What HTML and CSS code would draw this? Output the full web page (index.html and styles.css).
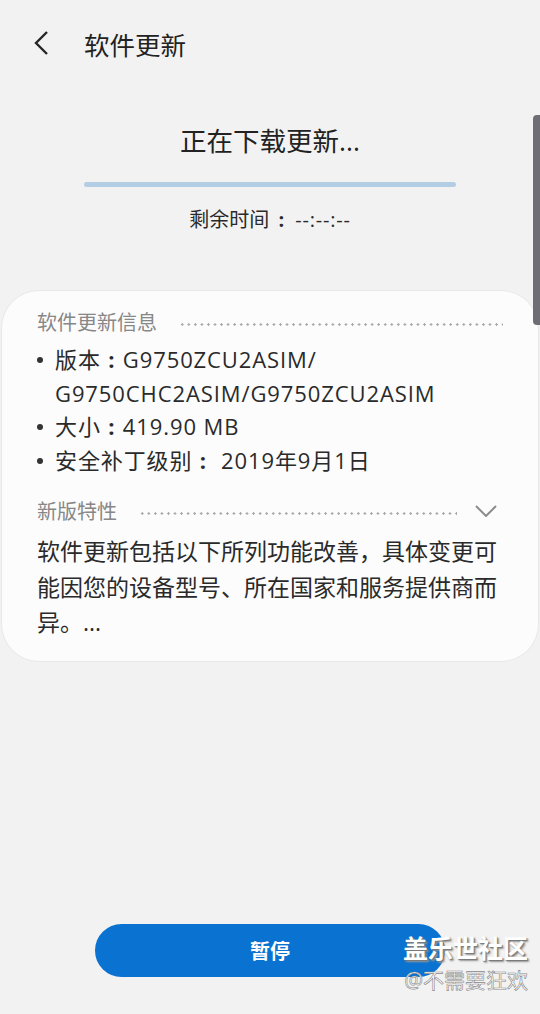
FILE: index.html
```html
<!DOCTYPE html>
<html lang="zh">
<head>
  <meta charset="UTF-8">
  <title>软件更新</title>
  <meta name="viewport" content="width=device-width, initial-scale=1.0">
  <link rel="stylesheet" href="styles.css">
</head>
<body>
<div class="screen">
  <header class="topbar">
    <svg class="back" width="16" height="26" viewBox="0 0 16 26"><path d="M14 2 L3 13 L14 24" fill="none" stroke="#262626" stroke-width="2.4"/></svg>
    <span class="title">软件更新</span>
  </header>

  <section class="status">
    <div class="status-title">正在下载更新...</div>
    <div class="bar"></div>
    <div class="remain">剩余时间<span class="colon">:</span><span class="clock">--:--:--</span></div>
  </section>

  <section class="card">
    <div class="label"><span>软件更新信息</span><i class="dots"></i></div>
    <ul class="info">
      <li><span class="dot"></span><span>版本<span class="colon">:</span>G9750ZCU2ASIM/<br>G9750CHC2ASIM/G9750ZCU2ASIM</span></li>
      <li><span class="dot"></span><span>大小<span class="colon">:</span>419.90 MB</span></li>
      <li><span class="dot"></span><span>安全补丁级别<span class="colon">:</span> 2019年9月1日</span></li>
    </ul>
    <div class="label label-new">
      <span>新版特性</span><i class="dots"></i>
      <svg class="chev" width="22" height="12" viewBox="0 0 22 12"><path d="M1 1 L11 11 L21 1" fill="none" stroke="#8c8c8c" stroke-width="2"/></svg>
    </div>
    <p class="desc">软件更新包括以下所列功能改善，具体变更可能因您的设备型号、所在国家和服务提供商而异。...</p>
  </section>

  <footer class="actions">
    <button class="pause">暂停</button>
  </footer>

  <div class="scrollbar"></div>
  <div class="watermark">
    <div class="wm-main">盖乐世社区</div>
    <div class="wm-sub">@不需要狂欢</div>
  </div>
</div>
</body>
</html>
```

FILE: styles.css
```css
body { margin: 0; background: #f2f2f2; font-family: "Open Sans", "Noto Sans CJK SC", sans-serif; color: #252525; }
.screen { position: relative; width: 540px; height: 1014px; display: flex; flex-direction: column; overflow: hidden; }
.colon { display: inline-block; width: 1em; text-align: center; font-weight: bold; }

.topbar { height: 86px; display: flex; align-items: center; }
.back { margin-left: 33px; margin-top: -1px; }
.title { margin-left: 35px; font-size: 25.5px; color: #222; }

.status { display: flex; flex-direction: column; align-items: center; }
.status-title { margin-top: 37px; font-size: 26.5px; line-height: 36px; color: #222; }
.bar { margin-top: 23px; width: 372px; height: 5px; border-radius: 3px; background: #b3cde4; }
.remain { margin-top: 18px; font-size: 20px; line-height: 30px; color: #2a2a2a; }
.remain .colon { margin: 0 4px 0 2px; }
.clock { letter-spacing: 0.8px; }

.card {
  margin: 55px 1px 0; padding: 17px 35px 20px;
  background: #fcfcfc; border: 1px solid #e8e8e8; border-radius: 38px;
}
.label { display: flex; align-items: center; font-size: 20px; line-height: 30px; color: #878787; }
.dots {
  flex: 1; height: 3px; margin: 2px 0 0 22px;
  background: radial-gradient(circle, #a8a8a8 1px, transparent 1.4px) 0 0 / 6.55px 3px repeat-x;
}
.label-new .dots { margin-right: 18px; }
.chev { margin-right: 6px; margin-top: -2px; }

.info { list-style: none; margin: 5px 0 0; padding: 0; font-size: 22px; line-height: 33.5px; letter-spacing: 0.9px; color: #2a2a2a; }
.info li { display: flex; align-items: flex-start; }
.info .dot { width: 6px; height: 6px; margin: 14px 12px 0 0; flex: none; border-radius: 50%; background: #333; }

.label-new { margin-top: 20px; }
.desc { margin: 7px 0 0; font-size: 23px; line-height: 35.5px; color: #2a2a2a; }

.actions { margin-top: auto; padding-bottom: 37px; display: flex; justify-content: center; }
.pause {
  width: 350px; height: 53px; border: none; border-radius: 27px;
  background: #0a72d0; color: #fff; font-family: inherit; font-size: 20px; font-weight: bold;
}

.scrollbar { position: absolute; right: 0; top: 115px; width: 7px; height: 210px; background: #6e6c75; border-radius: 4px 0 0 4px; }

.watermark { position: absolute; right: 12px; bottom: 20px; text-align: right; }
.wm-main { font-size: 25px; font-weight: bold; line-height: 32px; color: #fff; text-shadow: 1px 1px 1px #777, 2px 2px 2px #999; }
.wm-sub { margin-top: 2px; font-size: 21px; line-height: 28px; color: #fff; -webkit-text-stroke: 0.6px #888; }
```
